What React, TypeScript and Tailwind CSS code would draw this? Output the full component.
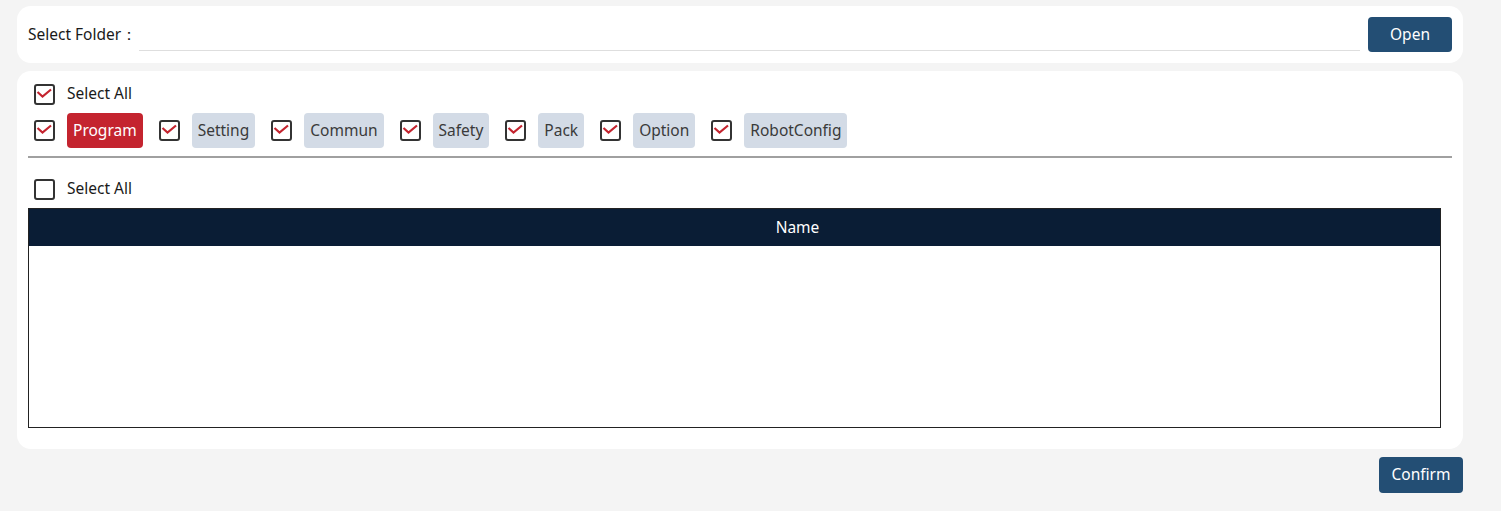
import React from 'react';

const tabs = [
  { id: 'program', label: 'Program', active: true },
  { id: 'setting', label: 'Setting' },
  { id: 'commun', label: 'Commun' },
  { id: 'safety', label: 'Safety' },
  { id: 'pack', label: 'Pack' },
  { id: 'option', label: 'Option' },
  { id: 'robot', label: 'RobotConfig' },
];

function Check({ checked }: { checked?: boolean }) {
  return (
    <span className="relative w-[21px] h-[21px] shrink-0 rounded-[3px] border-2 border-[#333] bg-white">
      {checked && (
        <svg viewBox="0 0 17 17" className="absolute left-0 top-0 w-[17px] h-[17px]">
          <path d="M1.5 6 L6.5 10.5 L15 3.5" fill="none" stroke="#c4242f" strokeWidth="2.2" />
        </svg>
      )}
    </span>
  );
}

export default function App() {
  return (
    <div
      className="w-[1501px] h-[511px] bg-[#f4f4f4] pt-[6px] pl-[17px] text-[15.5px] text-[#1a1a1a]"
      style={{ fontFamily: '"Noto Sans", "Open Sans", sans-serif' }}
    >
      <div className="w-[1446px]">
        {/* folder row */}
        <div className="flex items-center h-[57px] bg-white rounded-[14px] pl-[11px] pr-[11px]">
          <span className="shrink-0">Select Folder：</span>
          <div className="flex-1 h-[30px] mt-[3px] ml-[2px] mr-[8px] border-b border-[#dedede]" />
          <button className="w-[84px] h-[35px] rounded-[4px] bg-[#234e74] text-white">Open</button>
        </div>

        {/* main card */}
        <div className="mt-[8px] bg-white rounded-[14px] pt-[12px] pl-[11px] pr-[11px] pb-[21px] h-[378px]">
          <div className="flex items-center gap-[12px] h-[22px] pl-[6px]">
            <Check checked />
            <span>Select All</span>
          </div>
          <div className="flex items-center h-[35px] mt-[8px] pl-[6px]">
            {tabs.map((t, i) => (
              <div key={t.id} className={`flex items-center gap-[12px] ${i > 0 ? 'ml-[16px]' : ''}`}>
                <Check checked />
                <span
                  className={`h-[35px] flex items-center px-[6px] rounded-[4px] ${
                    t.active ? 'bg-[#c4242f] text-white' : 'bg-[#d3dbe6] text-[#3a3a3a]'
                  }`}
                >
                  {t.label}
                </span>
              </div>
            ))}
          </div>
          <div className="mt-[8px] h-[2px] w-[1424px] bg-[#a0a0a0]" />
          <div className="flex items-center gap-[12px] h-[22px] mt-[20px] pl-[6px]">
            <Check />
            <span>Select All</span>
          </div>
          <div className="mt-[8px] w-[1413px] h-[220px] border border-[#222] flex flex-col">
            <div className="h-[37px] bg-[#0a1d35] text-white flex items-center justify-center pl-[126px]">Name</div>
            <div className="flex-1 bg-white" />
          </div>
        </div>

        <div className="flex justify-end mt-[8px]">
          <button className="w-[84px] h-[36px] rounded-[4px] bg-[#234e74] text-white">Confirm</button>
        </div>
      </div>
    </div>
  );
}
